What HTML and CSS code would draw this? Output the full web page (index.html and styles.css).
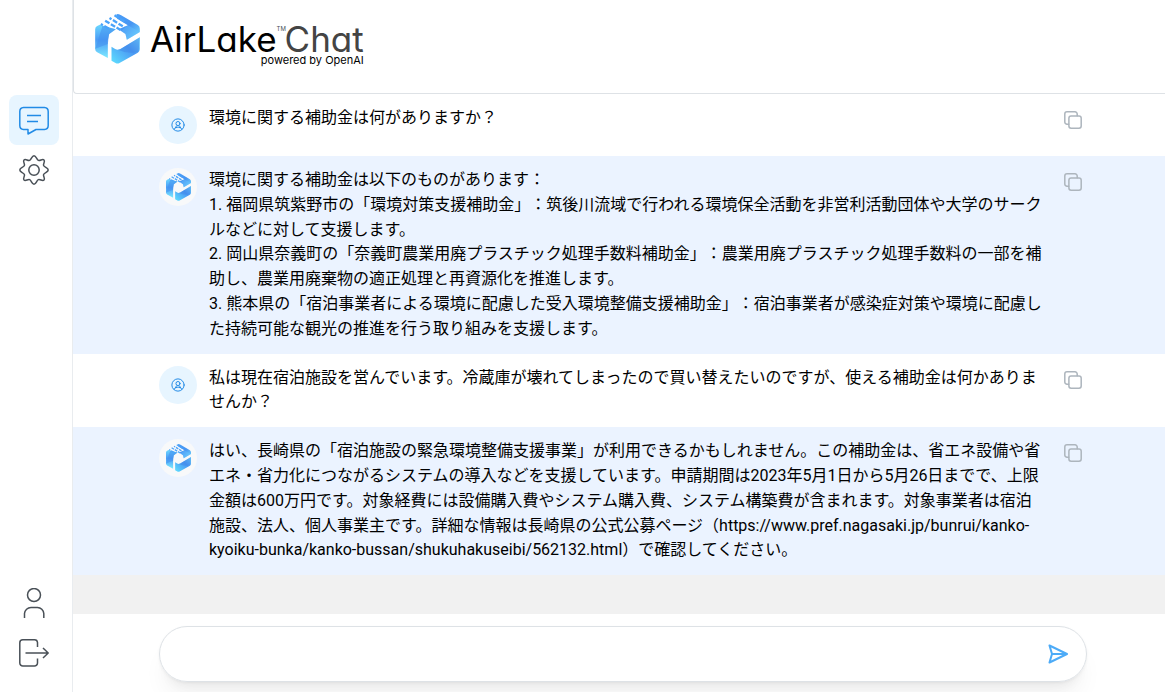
FILE: index.html
```
<!DOCTYPE html>
<html lang="ja">
<head>
    <meta charset="UTF-8">
    <meta name="viewport" content="width=device-width, initial-scale=1.0">
    <title>AirLake Chat</title>
    <link rel="stylesheet" href="styles.css">
</head>
<body>
<!-- shared icons -->
<svg class="sprite" aria-hidden="true">
    <defs>
        <linearGradient id="blade-left" x1="0" y1="0" x2="0" y2="1">
            <stop offset="0" stop-color="#6cd8ff"/><stop offset="0.45" stop-color="#4a9bf5"/><stop offset="1" stop-color="#7deaff"/>
        </linearGradient>
        <linearGradient id="blade-bottom" x1="0" y1="1" x2="1" y2="0">
            <stop offset="0" stop-color="#5fe0ff"/><stop offset="0.6" stop-color="#4a97f3"/><stop offset="1" stop-color="#7fe6ff"/>
        </linearGradient>
        <linearGradient id="blade-right" x1="0" y1="0" x2="1" y2="1">
            <stop offset="0" stop-color="#4a9df8"/><stop offset="0.5" stop-color="#4795f2"/><stop offset="1" stop-color="#74dcff"/>
        </linearGradient>
    </defs>
    <symbol id="mark" viewBox="0 0 134 150">
        <path d="M0 46Q0 39 6 36L14 32L62 46L42 60L38 78V132L6 115Q0 112 0 105Z" fill="url(#blade-left)"/>
        <path d="M0 104L22 36L62 46L42 60L38 90Z" fill="#438fee" opacity=".55"/>
        <path d="M49 140V98L60 105Q68 109 76 105L134 70V106Q134 112 128 116L73 147Q67 150 61 147Z" fill="url(#blade-bottom)"/>
        <path d="M68 107L76 105L134 70L130 114Q96 120 68 107Z" fill="#3f87e8" opacity=".5"/>
        <path d="M78 4L128 33Q134 37 134 44V54L95 77L91 60L70 46L98 34L66 14L64 0Q72 0 78 4Z" fill="url(#blade-right)"/>
        <path d="M78 51L98 34L134 54L95 77L91 60Z" fill="#66c4ff" opacity=".4"/>
        <g stroke="#4aa3fa" stroke-width="7" stroke-dasharray="15 5" fill="none">
            <path d="M58 4L92 25"/>
            <path d="M43 12L88 40" stroke-dashoffset="8"/>
            <path d="M30 20L76 48"/>
            <path d="M17 30L46 47" stroke-dashoffset="8"/>
        </g>
    </symbol>
    <symbol id="person-circle" viewBox="0 0 24 24">
        <g fill="none" stroke="currentColor" stroke-width="1.7" stroke-linecap="round" stroke-linejoin="round">
            <circle cx="12" cy="12" r="10.500"/><circle cx="12" cy="9.500" r="3.500"/>
            <path d="M5.500 19.500L9.500 13.500M18.500 19.500L14.500 13.500M8.500 16.500Q12 14 15.500 16.500"/>
        </g>
    </symbol>
    <symbol id="copy" viewBox="0 0 18 18">
        <g fill="none" stroke="currentColor" stroke-width="1.5" stroke-linecap="round" stroke-linejoin="round">
            <rect x="4.9" y="5" width="12.3" height="12.2" rx="2.2"/>
            <path d="M13.2 4.8V3A2.2 2.2 0 0 0 11 .8H3A2.2 2.2 0 0 0 .8 3v8A2.2 2.2 0 0 0 3 13.2h1.7"/>
        </g>
    </symbol>
</svg>

<nav class="sidebar">
    <div class="nav-group">
        <button class="nav-btn active" aria-label="チャット">
            <svg class="nav-icon" viewBox="0 0 30 30"><path d="M4.500 2.500H25.500A4 4 0 0 1 29.200 6.500V20.500A4 4 0 0 1 25.500 24.500H17L9 29V24.500H4.500A4 4 0 0 1 .8 20.500V6.500A4 4 0 0 1 4.500 2.500ZM8 10.500H22M8 16.500H19"/></svg>
        </button>
        <button class="nav-btn" aria-label="設定">
            <svg class="nav-icon" viewBox="0 0 30 30"><path d="M15 .8C17.200 .8 17.600 4.700 19.400 5.400C21.200 6.100 23.500 3.500 25 5C26.500 6.500 23.900 8.800 24.600 10.600C25.300 12.400 29.200 12.800 29.200 15C29.200 17.200 25.300 17.600 24.600 19.400C23.900 21.200 26.500 23.500 25 25C23.500 26.500 21.200 23.900 19.400 24.600C17.600 25.300 17.200 29.200 15 29.200C12.800 29.200 12.400 25.300 10.600 24.600C8.800 23.900 6.500 26.500 5 25C3.500 23.500 6.100 21.200 5.400 19.400C4.700 17.600 .8 17.200 .8 15C.8 12.800 4.700 12.400 5.400 10.600C6.100 8.800 3.500 6.500 5 5C6.500 3.500 8.800 6.100 10.600 5.400C12.400 4.700 12.800 .8 15 .8Z"/><circle cx="15" cy="15" r="5.200"/></svg>
        </button>
    </div>
    <div class="nav-group">
        <button class="nav-btn" aria-label="アカウント">
            <svg class="nav-icon" viewBox="0 0 30 30"><circle cx="15" cy="7" r="6.500"/><path d="M5.500 30V25.500A6.500 6.500 0 0 1 12 19.500H18.500A6.500 6.500 0 0 1 24.800 25.500V30"/></svg>
        </button>
        <button class="nav-btn" aria-label="ログアウト">
            <svg class="nav-icon" viewBox="0 0 30 30"><path d="M18.500 9V4.500A3 3 0 0 0 15.500 1.800H3.800A3 3 0 0 0 .8 4.800V25A3 3 0 0 0 3.800 28H15.500A3 3 0 0 0 18.500 25V20.500M6.500 15H29.200M24 10L29.200 15L24 20"/></svg>
        </button>
    </div>
</nav>

<main class="main">
    <header class="header">
        <svg class="header-mark"><use href="#mark"/></svg>
        <div class="brand">
            <h1 class="brand-name">AirLake<sup class="brand-tm">TM</sup><span class="brand-chat">Chat</span></h1>
            <p class="brand-sub">powered by OpenAI</p>
        </div>
    </header>

    <div class="chat">
        <section class="message">
            <div class="avatar"><svg class="avatar-person"><use href="#person-circle"/></svg></div>
            <p class="text">環境に関する補助金は何がありますか？</p>
            <button class="copy-btn" aria-label="コピー"><svg class="copy-icon"><use href="#copy"/></svg></button>
        </section>

        <section class="message bot">
            <div class="avatar"><svg class="avatar-mark"><use href="#mark"/></svg></div>
            <p class="text">環境に関する補助金は以下のものがあります：<br>
                1. 福岡県筑紫野市の「環境対策支援補助金」：筑後川流域で行われる環境保全活動を非営利活動団体や大学のサークルなどに対して支援します。<br>
                2. 岡山県奈義町の「奈義町農業用廃プラスチック処理手数料補助金」：農業用廃プラスチック処理手数料の一部を補助し、農業用廃棄物の適正処理と再資源化を推進します。<br>
                3. 熊本県の「宿泊事業者による環境に配慮した受入環境整備支援補助金」：宿泊事業者が感染症対策や環境に配慮した持続可能な観光の推進を行う取り組みを支援します。</p>
            <button class="copy-btn" aria-label="コピー"><svg class="copy-icon"><use href="#copy"/></svg></button>
        </section>

        <section class="message">
            <div class="avatar"><svg class="avatar-person"><use href="#person-circle"/></svg></div>
            <p class="text">私は現在宿泊施設を営んでいます。冷蔵庫が壊れてしまったので買い替えたいのですが、使える補助金は何かありませんか？</p>
            <button class="copy-btn" aria-label="コピー"><svg class="copy-icon"><use href="#copy"/></svg></button>
        </section>

        <section class="message bot">
            <div class="avatar"><svg class="avatar-mark"><use href="#mark"/></svg></div>
            <p class="text">はい、長崎県の「宿泊施設の緊急環境整備支援事業」が利用できるかもしれません。この補助金は、省エネ設備や省エネ・省力化につながるシステムの導入などを支援しています。申請期間は2023年5月1日から5月26日までで、上限金額は600万円です。対象経費には設備購入費やシステム購入費、システム構築費が含まれます。対象事業者は宿泊施設、法人、個人事業主です。詳細な情報は長崎県の公式公募ページ（https://www.pref.nagasaki.jp/bunrui/kanko-<wbr>kyoiku-bunka/kanko-bussan/shukuhakuseibi/562132.html）で確認してください。</p>
            <button class="copy-btn" aria-label="コピー"><svg class="copy-icon"><use href="#copy"/></svg></button>
        </section>
    </div>

    <form class="composer">
        <div class="composer-box">
            <input class="composer-input" type="text" aria-label="メッセージ">
            <button class="send-btn" type="button" aria-label="送信">
                <svg class="send-icon" viewBox="0 0 20 20"><path d="M1.500 1.500L19 10L1.500 18.500L4 10ZM4 10H18"/></svg>
            </button>
        </div>
    </form>
</main>
</body>
</html>
```
FILE: styles.css
```
* {
    margin: 0;
    padding: 0;
    box-sizing: border-box;
}
body {
    display: flex;
    height: 100vh;
    font-family: Roboto, "Noto Sans CJK JP", sans-serif;
    font-size: 16px;
    line-height: 1.55;
    color: #000;
    background: #fff;
}
button {
    border: none;
    background: none;
    cursor: pointer;
}
.sprite {
    position: absolute;
    width: 0;
    height: 0;
}

/* sidebar */
.sidebar {
    display: flex;
    flex-direction: column;
    justify-content: space-between;
    flex-shrink: 0;
    padding: 95px 13px 14px 9px;
    border-right: 1px solid #e9ecef;
}
.nav-group {
    display: flex;
    flex-direction: column;
}
.nav-btn {
    display: flex;
    align-items: center;
    justify-content: center;
    width: 50px;
    height: 50px;
    border-radius: 8px;
    color: #495057;
}
.nav-btn.active {
    background: #e7f5ff;
    color: #228be6;
}
.nav-icon {
    width: 30px;
    height: 30px;
    fill: none;
    stroke: currentColor;
    stroke-width: 1.5;
    stroke-linejoin: round;
}

/* header */
.main {
    display: flex;
    flex-direction: column;
    flex: 1;
    min-width: 0;
}
.header {
    display: flex;
    align-items: flex-start;
    gap: 10px;
    padding: 14px 21px 25px;
    border: 1px solid #dee2e6;
    border-width: 0 0 1px 1px;
    border-bottom-left-radius: 4px;
}
.header-mark {
    width: 45px;
    height: 50px;
}
.brand {
    display: flex;
    flex-direction: column;
    align-items: flex-end;
    height: 54px;
    padding-top: 10px;
    font-family: Inter, sans-serif;
}
.brand-name {
    display: flex;
    font-size: 35px;
    font-weight: 400;
    line-height: 30px;
    font-feature-settings: "cv11" 1;
}
.brand-tm {
    width: 8px;
    font-size: 6px;
    line-height: 10px;
    color: #495057;
}
.brand-chat {
    color: #444;
}
.brand-sub {
    font-size: 11px;
    line-height: 12px;
}

/* messages */
.chat {
    flex: 1;
    min-height: 0;
    overflow: hidden;
    background: #f1f1f1;
}
.message {
    display: flex;
    align-items: flex-start;
    padding: 12px 78px 12px 86px;
    background: #fff;
}
.message.bot {
    background: #ebf3ff;
}
.avatar {
    display: flex;
    align-items: center;
    justify-content: center;
    flex-shrink: 0;
    width: 38px;
    height: 38px;
    border-radius: 50%;
    background: #e7f5ff;
    color: #228be6;
}
.bot .avatar {
    background: #f8f9fa;
}
.avatar-person {
    width: 14px;
    height: 14px;
}
.avatar-mark {
    width: 25px;
    height: 28px;
}
.text {
    flex: 1;
    min-width: 0;
    margin: 0 16px 0 12px;
    text-spacing-trim: space-all;
}
.copy-btn {
    display: flex;
    align-items: center;
    justify-content: center;
    width: 28px;
    height: 28px;
    color: #adb5bd;
}
.copy-icon {
    width: 18px;
    height: 18px;
}

/* composer */
.composer {
    padding: 12px 78px 10px 86px;
    overflow: hidden;
}
.composer-box {
    display: flex;
    align-items: center;
    height: 56px;
    padding: 0 10px 0 24px;
    border: 1px solid #dee2e6;
    border-radius: 28px;
    box-shadow: 0 1px 3px rgba(0, 0, 0, 0.05), 0 20px 25px -5px rgba(0, 0, 0, 0.05), 0 10px 10px -5px rgba(0, 0, 0, 0.04);
}
.composer-input {
    flex: 1;
    min-width: 0;
    border: none;
    outline: none;
    font: inherit;
    background: none;
}
.send-btn {
    display: flex;
    align-items: center;
    justify-content: center;
    width: 36px;
    height: 36px;
}
.send-icon {
    width: 20px;
    height: 20px;
    fill: none;
    stroke: #4dabf7;
    stroke-width: 2;
    stroke-linejoin: round;
}
```
